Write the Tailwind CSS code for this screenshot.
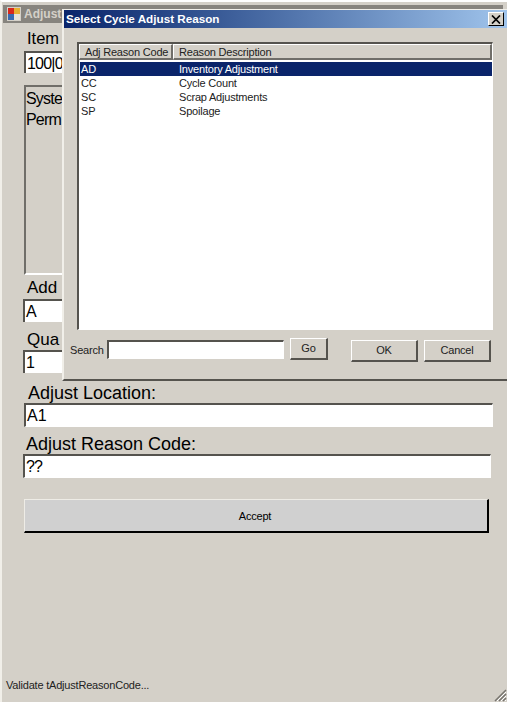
<!DOCTYPE html>
<html lang="en">
<head>
  <meta charset="UTF-8" />
  <title>Adjust</title>
  <script src="https://cdn.jsdelivr.net/npm/@tailwindcss/browser@4"></script>
</head>
<body class="m-0 overflow-hidden bg-[#d4d0c8] font-['Liberation_Sans',Arial,sans-serif] text-black">
  <div class="relative h-[702px] w-[507px] overflow-hidden">
    <!-- Main window -->
    <div class="flex h-full flex-col border-t-2 border-l-2 border-t-white border-l-[#f1efe9] pt-[3px] pl-[1px]">
      <div class="flex h-[18px] w-[500px] items-center gap-[3px] bg-[#87847e] pl-[4px] text-[12px] font-bold text-[#d4d0c8]">
        <svg width="14" height="14" viewBox="0 0 14 14">
          <rect x="0" y="0" width="14" height="14" fill="#d4d0c8" />
          <rect x="1" y="1" width="6" height="6" fill="#d8281c" />
          <rect x="7" y="1" width="6" height="6" fill="#e8b030" />
          <rect x="1" y="7" width="6" height="6" fill="#3a6ab0" />
          <rect x="7" y="7" width="6" height="6" fill="#e8e4d8" />
        </svg>
        <span>Adjust</span>
      </div>

      <div class="flex flex-col pl-[20px]">
        <div class="mt-[4px] ml-[4px] h-[24px] text-[16.5px] leading-[23px]">Item</div>
        <div class="ml-[1px] h-[22px] w-[470px] border-t-2 border-l-2 border-t-[#55534e] border-l-[#55534e] bg-white pl-[1px] text-[16px] leading-[21px] tracking-[-0.8px]">100|0</div>
        <div class="mt-[12px] ml-[1px] h-[190px] w-[470px] border-2 border-t-[#706e69] border-l-[#706e69] border-r-white border-b-white bg-[#d4d0c8] pt-[1px] text-[16px] leading-[21px] tracking-[-0.8px]">System<br />Perm</div>
        <div class="mt-[2px] ml-[4px] h-[22px] text-[17px] leading-[22px]">Add</div>
        <div class="h-[23px] w-[470px] border-t-2 border-l-2 border-t-[#55534e] border-l-[#55534e] bg-white pl-[1px] text-[16px] leading-[21px]">A</div>
        <div class="mt-[6px] ml-[4px] h-[22px] text-[17px] leading-[24px]">Qua</div>
        <div class="h-[23px] w-[470px] border-t-2 border-l-2 border-t-[#55534e] border-l-[#55534e] bg-white pl-[1px] text-[16px] leading-[21px]">1</div>
        <div class="mt-[9px] ml-[5px] h-[21px] text-[18px] leading-[22px]">Adjust Location:</div>
        <div class="ml-[1px] h-[24px] w-[469px] border-t-2 border-l-2 border-r border-b border-t-[#55534e] border-l-[#55534e] border-r-white border-b-white bg-white pl-[1px] text-[16px] leading-[21px]">A1</div>
        <div class="mt-[6px] ml-[3px] h-[21px] text-[18px] leading-[22px]">Adjust Reason Code:</div>
        <div class="h-[24px] w-[468px] border-t-2 border-l-2 border-r border-b border-t-[#55534e] border-l-[#55534e] border-r-white border-b-white bg-white pl-[1px] text-[16px] leading-[22px] tracking-[-1px]">??</div>
        <button class="mt-[21px] ml-[1px] h-[34px] w-[465px] border-t border-l border-t-[#eeece6] border-l-[#eeece6] border-r-2 border-b-2 border-r-black border-b-black bg-[#d0d0d0] pt-[2px] pr-[2px] text-[11px] tracking-[-0.2px]">Accept</button>
      </div>

      <div class="mt-auto mb-[10px] ml-[3px] text-[11px] leading-[14px] tracking-[-0.2px] text-[#222]">Validate tAdjustReasonCode...</div>
    </div>

    <!-- Resize grip -->
    <svg class="absolute right-0 bottom-0" width="14" height="14" viewBox="0 0 14 14">
      <path d="M13 2 L2 13 M13 6 L6 13 M13 10 L10 13" stroke="#77746e" stroke-width="1.5" />
      <path d="M13 4 L4 13 M13 8 L8 13 M13 12 L12 13" stroke="#ffffff" stroke-width="1" />
    </svg>

    <!-- Dialog window -->
    <div class="absolute top-[9px] left-[62px] flex h-[372px] w-[460px] flex-col border-t-1 border-l-2 border-b-2 border-t-[#f1efe9] border-l-[#f1efe9] border-b-[#55534e] bg-[#d4d0c8]">
      <div class="flex h-[18px] items-center bg-gradient-to-r from-[#0a246a] to-[#a6caf0] pl-[2px] text-[11.7px] font-bold text-white">
        <span class="w-[422px] whitespace-nowrap">Select Cycle Adjust Reason</span>
        <div class="flex h-[14px] w-[16px] items-center justify-center border border-t-white border-l-white border-r-black border-b-black bg-[#d4d0c8]">
          <svg width="10" height="9" viewBox="0 0 10 9"><path d="M1 0.5 L9 8.5 M9 0.5 L1 8.5" stroke="#000" stroke-width="1.7" /></svg>
        </div>
      </div>

      <!-- List -->
      <div class="mt-[14px] ml-[13px] flex h-[288px] w-[416px] flex-col border-t-2 border-l-2 border-t-[#55534e] border-l-[#55534e] border-r border-b border-r-white border-b-white bg-white">
        <div class="flex h-[16px] bg-[#d4d0c8] text-[11px] leading-[15px] tracking-[-0.2px] whitespace-nowrap text-[#222]">
          <div class="h-full w-[94px] border-t border-l border-t-white border-l-white border-r-2 border-b-2 border-r-[#706e69] border-b-[#706e69] pl-[5px]">Adj Reason Code</div>
          <div class="h-full flex-1 border-t border-l border-t-white border-l-white border-r-2 border-b-2 border-r-[#706e69] border-b-[#706e69] pl-[5px]">Reason Description</div>
        </div>
        <div class="mt-[2px] flex flex-col pl-[1px] text-[11px] leading-[14px] tracking-[-0.2px] whitespace-nowrap text-[#222]">
          <div class="flex bg-[#0a246a] text-white"><span class="w-[99px] pl-[1px]">AD</span><span>Inventory Adjustment</span></div>
          <div class="flex"><span class="w-[99px] pl-[1px]">CC</span><span>Cycle Count</span></div>
          <div class="flex"><span class="w-[99px] pl-[1px]">SC</span><span>Scrap Adjustments</span></div>
          <div class="flex"><span class="w-[99px] pl-[1px]">SP</span><span>Spoilage</span></div>
        </div>
      </div>

      <!-- Footer row -->
      <div class="mt-[8px] ml-[6px] flex items-start text-[11px] tracking-[-0.2px] text-[#222]">
        <span class="mt-[5px] w-[37px] leading-[14px]">Search</span>
        <div class="mt-[2px] h-[19px] w-[177px] border-t-2 border-l-2 border-t-[#55534e] border-l-[#55534e] border-r border-b border-r-white border-b-white bg-white"></div>
        <button class="ml-[6px] h-[22px] w-[38px] border-t border-l border-t-white border-l-white border-r-2 border-b-2 border-r-[#55534e] border-b-[#55534e] bg-[#d4d0c8]">Go</button>
        <button class="mt-[2px] ml-[23px] h-[22px] w-[67px] border-t border-l border-t-white border-l-white border-r-2 border-b-2 border-r-[#55534e] border-b-[#55534e] bg-[#d4d0c8]">OK</button>
        <button class="mt-[2px] ml-[6px] h-[22px] w-[67px] border-t border-l border-t-white border-l-white border-r-2 border-b-2 border-r-[#55534e] border-b-[#55534e] bg-[#d4d0c8]">Cancel</button>
      </div>
    </div>
  </div>
</body>
</html>
